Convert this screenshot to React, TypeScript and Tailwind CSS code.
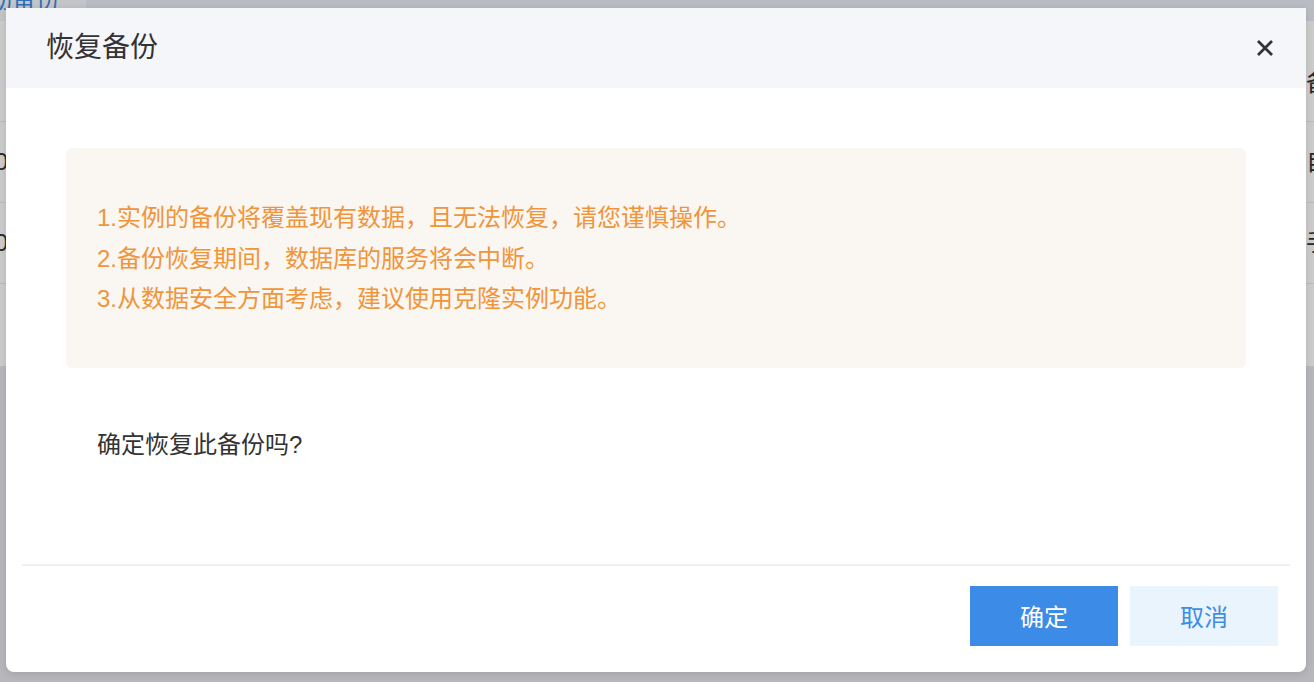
const cjk = { fontFamily: '"Liberation Sans", "Noto Sans CJK SC", sans-serif' };

const tips = [
  "1.实例的备份将覆盖现有数据，且无法恢复，请您谨慎操作。",
  "2.备份恢复期间，数据库的服务将会中断。",
  "3.从数据安全方面考虑，建议使用克隆实例功能。",
];

function BackgroundPage() {
  const rows = [
    { time: "2020-06-10 02:00:00", kind: "自动" },
    { time: "2020-06-09 18:30:00", kind: "手动" },
  ];

  return (
    <div className="flex h-full w-full flex-col bg-[#e6e7ec]">
      <div className="flex h-[21px] shrink-0 overflow-hidden bg-[#e8ecf3]">
        <div className="flex h-full w-[86px] items-start justify-end overflow-hidden bg-[#f4f7fc]">
          <span className="-mt-[18px] whitespace-nowrap pr-[26px] text-[24px] leading-[36px] text-[#3f8ae0]">
            自动备份
          </span>
        </div>
      </div>
      <div className="flex h-[345px] shrink-0 flex-col overflow-hidden bg-white text-[24px] text-[#333]">
        <div className="flex h-[101px] shrink-0 items-start border-b border-[#ececf0] pt-[44px]">
          <div className="w-[1306px] shrink-0" />
          <span className="shrink-0 whitespace-nowrap leading-[36px]">备份方式</span>
        </div>
        {rows.map((row) => (
          <div
            key={row.time}
            className="flex h-[81px] shrink-0 items-center border-b border-[#ececf0]"
          >
            <div className="flex w-[8px] shrink-0 justify-end">
              <span className="whitespace-nowrap">{row.time}</span>
            </div>
            <div className="w-[1298px] shrink-0" />
            <span className="shrink-0 whitespace-nowrap">{row.kind}</span>
          </div>
        ))}
      </div>
    </div>
  );
}

function CloseIcon() {
  return (
    <svg width="18" height="18" viewBox="0 0 18 18" fill="none">
      <path
        d="M2 2L16 16M16 2L2 16"
        stroke="#333333"
        strokeWidth="2.8"
        strokeLinecap="butt"
      />
    </svg>
  );
}

export default function App() {
  return (
    <div className="relative h-[682px] w-full overflow-hidden" style={cjk}>
      <BackgroundPage />

      <div className="absolute inset-0 bg-black/20 pl-[6px] pt-[8px]">
        <div className="flex h-[664px] w-[1300px] flex-col rounded-b-lg bg-white shadow-[0_2px_8px_rgba(0,0,0,0.12)]">
          <div className="flex h-[80px] shrink-0 items-center justify-between bg-[#f5f6fa] pl-[40px] pr-[31px]">
            <h2 className="text-[28px] font-normal leading-none text-[#333]">
              恢复备份
            </h2>
            <button type="button" className="flex h-[20px] w-[20px] items-center justify-center">
              <CloseIcon />
            </button>
          </div>

          <div className="flex flex-1 flex-col pt-[60px]">
            <div className="mx-[60px] flex h-[220px] flex-col justify-center rounded-[6px] bg-[#faf6f2] pl-[31px] pt-[2px]">
              {tips.map((tip) => (
                <p key={tip} className="text-[24px] leading-[40.5px] text-[#f0953a]">
                  {tip}
                </p>
              ))}
            </div>

            <p className="mt-[59px] pl-[91px] text-[24px] leading-[36px] text-[#333]">
              确定恢复此备份吗?
            </p>
          </div>

          <div className="mx-[16px] h-[2px] bg-[#f0f0f0]" />

          <div className="flex justify-end gap-[12px] pb-[26px] pr-[28px] pt-[20px]">
            <button
              type="button"
              className="h-[60px] w-[148px] bg-[#3c8ce7] pt-[3px] text-[24px] text-white"
            >
              确定
            </button>
            <button
              type="button"
              className="h-[60px] w-[148px] bg-[#eaf4fd] pt-[3px] text-[24px] text-[#3d8de6]"
            >
              取消
            </button>
          </div>
        </div>
      </div>
    </div>
  );
}
